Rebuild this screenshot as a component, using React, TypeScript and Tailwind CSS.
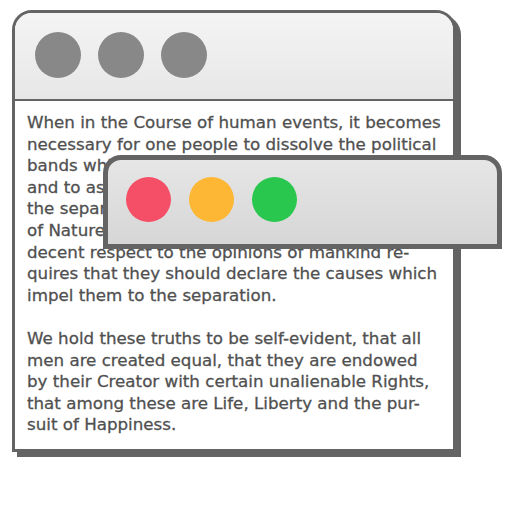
import React from 'react';

const paragraphs: string[][] = [
  [
    'When in the Course of human events, it becomes',
    'necessary for one people to dissolve the political',
    'bands which have connected them with another,',
    'and to assume among the powers of the earth,',
    'the separate and equal station to which the Laws',
    "of Nature and of Nature's God entitle them, a",
    'decent respect to the opinions of mankind re-',
    'quires that they should declare the causes which',
    'impel them to the separation.',
  ],
  [
    'We hold these truths to be self-evident, that all',
    'men are created equal, that they are endowed',
    'by their Creator with certain unalienable Rights,',
    'that among these are Life, Liberty and the pur-',
    'suit of Happiness.',
  ],
];

function Dot({ color }: { color: string }) {
  return <span className={`block w-[46px] h-[46px] rounded-full ${color}`} />;
}

export default function App() {
  return (
    <div className="relative w-[512px] h-[512px] bg-white overflow-hidden select-none">
      {/* back window */}
      <div className="ml-[12px] mt-[10px] w-[444px] h-[442px] border-[3px] border-[#646464] rounded-t-[20px] bg-white shadow-[5px_5px_0_#646464] flex flex-col">
        <div className="h-[88px] shrink-0 rounded-t-[17px] bg-gradient-to-b from-[#f4f4f4] to-[#e7e7e7] border-b-2 border-[#646464] flex items-center gap-[17px] pl-[20px] pb-[2px]">
          <Dot color="bg-[#888888]" />
          <Dot color="bg-[#888888]" />
          <Dot color="bg-[#888888]" />
        </div>
        <div className="pt-[11px] pl-[12px] font-['DejaVu_Sans',sans-serif] text-[16.7px] leading-[21.6px] text-[#505050] [-webkit-text-stroke:0.3px_#505050] whitespace-nowrap flex flex-col gap-[21.6px]">
          {paragraphs.map((lines, i) => (
            <p key={i}>
              {lines.map((line, j) => (
                <span key={j} className="block">
                  {line}
                </span>
              ))}
            </p>
          ))}
        </div>
      </div>

      {/* front window */}
      <div className="absolute left-[103px] top-[155px] w-[399px] h-[94px] border-[5px] border-[#646464] rounded-t-[18px] bg-gradient-to-b from-[#e6e6e6] to-[#d6d6d6] flex items-start gap-[18px] pl-[18px] pt-[17px]">
        <span className="block w-[45px] h-[45px] rounded-full bg-[#f44f66]" />
        <span className="block w-[45px] h-[45px] rounded-full bg-[#fdb734]" />
        <span className="block w-[45px] h-[45px] rounded-full bg-[#29c74e]" />
      </div>
    </div>
  );
}
